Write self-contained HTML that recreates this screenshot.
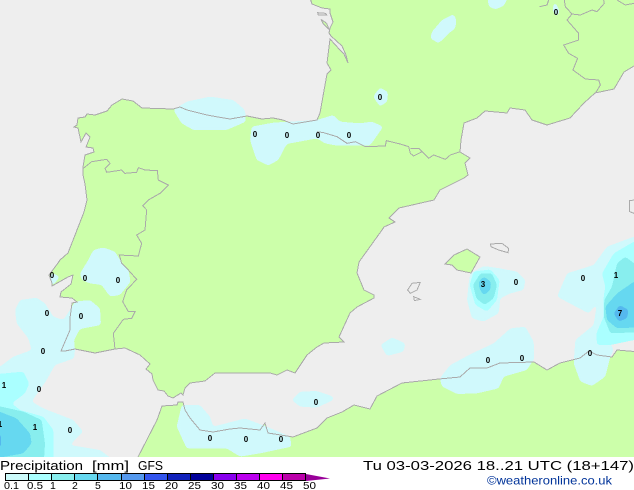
<!DOCTYPE html>
<html><head><meta charset="utf-8"><style>
html,body{margin:0;padding:0;background:#fff;width:634px;height:490px;overflow:hidden}
svg{display:block}
.t{font-family:"Liberation Sans",sans-serif;fill:#000}
.n{font-family:"Liberation Sans",sans-serif;font-size:8px;font-weight:bold;fill:#000;text-anchor:middle}
.l{font-family:"Liberation Sans",sans-serif;font-size:10.5px;fill:#000}
.r0{fill:#d0f9fc}.r1{fill:#aaffff}.r2{fill:#88eeee}.r3{fill:#66d8f0}.r4{fill:#55b8ee}
.s polygon{filter:url(#s)}
.c{fill:none;stroke:#aaaaaa;stroke-width:1;shape-rendering:crispEdges}
</style></head><body>
<svg width="634" height="490" viewBox="0 0 634 490" xmlns="http://www.w3.org/2000/svg">
<rect width="634" height="457" fill="#eeeeee"/>
<defs>
<filter id="s" x="-30%" y="-30%" width="160%" height="160%" color-interpolation-filters="sRGB">
<feGaussianBlur stdDeviation="5"/>
<feComponentTransfer><feFuncA type="discrete" tableValues="0 1"/></feComponentTransfer>
</filter>
<polygon id="eu" points="310,-2 312,4 322,8 330,9 330,13 333,22 330,28 329,33 331,36 342,46 346,55 348,63 344,54 340,50 330,39 327,63 331,70 327,74 325,85 320,113 317,120 305,122 293,124 283,120 273,118 262,119 247,116 230,119 218,117 207,115 187,110 180,107 173,109 142,108 133,101 122,99 112,105 107,111 95,115 87,114 85,117 78,118 77,125 74,127 78,128 81,142 86,133 90,137 86,147 93,148 94,152 85,155 83,167 83,175 85,184 87,200 84,212 77,230 68,253 60,260 58,263 55,267 49,275 52,283 52,286 68,277 73,275 71,284 61,292 60,297 72,298 77,302 72,303 70,318 70,330 61,351 65,351 75,349 95,353 115,349 125,348 140,355 150,364 146,369 152,374 153,380 158,390 164,391 168,396 173,398 181,393 183,395 185,388 190,383 205,381 215,373 230,373 270,373 277,375 287,370 295,373 307,355 317,347 324,343 344,342 339,337 350,313 357,307 374,298 374,295 364,290 357,273 359,262 382,230 384,227 395,222 389,218 399,208 434,200 440,190 464,178 468,175 465,163 470,158 460,152 461,140 464,123 477,118 485,111 507,113 510,108 525,110 532,120 547,125 570,118 584,103 595,93 614,89 624,72 634,66 640,66 640,-2"/>
<polygon id="af" points="137,459 157,420 162,406 177,405 178,402 183,402 185,410 190,418 200,430 213,432 230,429 240,428 260,430 265,423 268,433 293,437 317,428 327,418 342,412 354,405 370,409 377,396 402,383 439,379 460,377 470,368 487,368 500,363 534,362 547,370 560,363 580,358 589,351 597,355 612,357 617,350 640,352 640,459"/>
<polygon id="ma" points="445,264 454,255 467,249 480,257 471,273 457,270 452,265"/>
</defs>
<use href="#eu" fill="#ccffaa"/>
<use href="#af" fill="#ccffaa"/>
<use href="#ma" fill="#ccffaa"/>

<!-- north rain -->
<g transform="scale(.33333)" class="r0 s">
<polygon points="520,330 560,305 630,290 700,300 735,330 738,365 680,390 580,390 545,370"/>
<polygon points="755,380 820,368 951,360 1000,345 1020,365 1080,370 1115,365 1150,380 1110,437 1010,437 975,430 951,415 860,432 835,480 805,497 770,480 750,420"/>
<polygon points="1140,262 1164,276 1162,305 1140,320 1119,290"/>
<polygon points="1296,95 1326,60 1361,42 1369,60 1366,85 1346,100 1316,130 1291,115"/>
<polygon points="1459,-40 1521,-40 1521,0 1511,18 1486,28 1466,20"/>
<polygon points="1660,10 1669,10 1679,35 1669,52 1659,35"/>
</g>
<!-- west rain -->
<g transform="translate(0,230) scale(.33333)" class="s">
<g class="r0">
<polygon points="240,130 265,90 280,60 310,52 345,65 360,90 385,120 392,155 360,195 330,200 305,165 270,160 245,150"/>
<polygon points="45,240 60,210 110,203 135,220 160,260 190,270 210,240 225,215 270,210 300,235 303,285 240,297 222,330 225,360 222,385 165,405 140,450 95,515 130,535 220,570 250,605 210,645 300,660 340,690 300,720 -40,720 -40,410 0,410 40,380 95,360 85,325 50,280"/>
<polygon points="152,127 180,140 160,165 152,160"/>
<polygon points="545,525 600,525 630,560 640,590 735,565 800,590 870,620 875,650 780,670 720,680 680,655 560,655 530,590"/>
<polygon points="875,510 900,485 951,483 1000,500 1000,510 951,533 900,530"/>
</g>
<polygon class="r1" points="-40,435 70,425 88,460 75,490 35,520 60,540 130,560 160,600 160,720 -40,720"/>
<polygon class="r2" points="-40,520 70,545 125,570 135,640 130,720 -40,720"/>
<polygon class="r3" points="-40,530 50,565 90,610 95,640 70,670 -40,690"/>
<polygon class="r4" points="-40,605 3,615 3,650 -40,660"/>
</g>
<!-- east rain -->
<g transform="translate(317,230) scale(.33333)" class="s">
<g class="r0">
<polygon points="460,130 500,108 550,115 600,125 625,150 620,180 580,190 550,205 545,250 500,275 465,265 450,210 455,160"/>
<polygon points="190,345 225,322 265,340 260,365 210,378"/>
<polygon points="368,445 400,405 465,370 530,340 580,295 625,290 650,335 652,385 630,420 560,440 545,475 480,490 420,492 375,470"/>
<polygon points="720,200 750,130 830,105 870,50 951,20 1000,10 1000,320 880,340 890,360 880,380 865,440 825,468 790,455 770,400 775,330 830,285 840,220 815,250"/>
</g>
<polygon class="r1" points="458,165 470,125 520,118 548,150 540,210 510,245 475,225"/>
<polygon class="r2" points="468,165 490,130 525,130 540,165 530,205 503,225 478,205"/>
<polygon class="r3" points="485,155 500,140 522,155 520,180 500,197 487,175"/>
<polygon class="r1" points="855,130 890,70 951,35 1000,25 1000,320 880,345 840,345 838,310 860,260 860,200 865,170"/>
<polygon class="r2" points="885,170 900,100 925,80 951,100 1000,100 1000,305 880,310 860,260 862,210"/>
<polygon class="r3" points="865,230 900,190 951,155 1000,140 1000,290 900,295 870,270"/>
<polygon class="r4" points="890,250 908,225 935,240 930,265 905,275"/>
</g>

<!-- coast lines -->
<use href="#eu" class="c"/>
<use href="#af" class="c"/>
<use href="#ma" class="c"/>
<g transform="translate(317,0) scale(.33333)" fill="none" stroke="#aaaaaa" stroke-width="3" shape-rendering="crispEdges">
<polyline points="0,395 20,398 60,410 90,430 115,425 145,440 205,438 208,422 250,432 275,440 280,460 290,468 315,455 335,475 350,465 385,478 400,465 430,455"/>
<polyline points="280,445 305,445 315,455"/>
<polyline points="742,0 745,20 765,42 750,60 785,100 785,120 740,135 755,160 782,175 768,210 805,237 845,240 850,255 835,280"/>
<polyline points="765,42 790,45 825,30 840,35 862,10 860,0"/>
<polyline points="900,0 925,15 951,10"/>
<polyline points="668,20 690,15 695,0"/>
<polyline points="951,600 938,602 938,635 951,640"/>
</g>
<g transform="translate(305,0) scale(.33333)" fill="none" stroke="#aaaaaa" stroke-width="3" shape-rendering="crispEdges">
<polygon points="38,38 62,40 65,45 40,45"/>
<polygon points="48,58 65,70 72,88 55,72" fill="#ccffaa"/>
</g>
<g transform="scale(.33333)" fill="none" stroke="#aaaaaa" stroke-width="3" shape-rendering="crispEdges">
<polyline points="250,505 275,485 320,478 330,490 315,505 320,517 365,510 375,520 410,517 415,503 435,510 472,512 475,540 505,555 480,580 445,600 428,617 440,630 435,690 410,705 425,730 415,768 358,765 365,790 385,810 410,838 380,870 368,905 385,935 405,935 395,955 370,958 340,1000 345,1048"/>
</g>
<g transform="translate(317,230) scale(.33333)" fill="none" stroke="#aaaaaa" stroke-width="3" shape-rendering="crispEdges">
<polygon points="520,42 555,40 575,55 573,68 545,60 522,50"/>
<polygon points="272,180 285,160 310,157 300,180 280,190"/>
<polygon points="290,200 310,208 292,212"/>
</g>

<!-- numbers -->
<text class="n" x="255" y="137">0</text><text class="n" x="287" y="138">0</text><text class="n" x="318" y="138">0</text><text class="n" x="349" y="138">0</text>
<text class="n" x="380" y="100">0</text><text class="n" x="556" y="15">0</text>
<text class="n" x="52" y="278">0</text><text class="n" x="85" y="281">0</text><text class="n" x="118" y="283">0</text>
<text class="n" x="47" y="316">0</text><text class="n" x="81" y="319">0</text><text class="n" x="43" y="354">0</text>
<text class="n" x="39" y="392">0</text><text class="n" x="4" y="388">1</text><text class="n" x="35" y="430">1</text><text class="n" x="0" y="427">1</text><text class="n" x="70" y="433">0</text>
<text class="n" x="210" y="441">0</text><text class="n" x="246" y="442">0</text><text class="n" x="281" y="442">0</text><text class="n" x="316" y="405">0</text>
<text class="n" x="483" y="287">3</text><text class="n" x="516" y="285">0</text><text class="n" x="583" y="281">0</text><text class="n" x="616" y="278">1</text><text class="n" x="620" y="316">7</text>
<text class="n" x="488" y="363">0</text><text class="n" x="522" y="361">0</text><text class="n" x="590" y="356">0</text>

<rect y="457" width="634" height="33" fill="#fff"/>
<!-- legend titles -->
<text class="t" x="0" y="470" font-size="13" textLength="83" lengthAdjust="spacingAndGlyphs">Precipitation</text>
<text class="t" x="92" y="470" font-size="13" textLength="37" lengthAdjust="spacingAndGlyphs">[mm]</text>
<text class="t" x="138" y="470" font-size="13" textLength="25" lengthAdjust="spacingAndGlyphs">GFS</text>
<text class="t" x="363" y="470" font-size="13" textLength="271" lengthAdjust="spacingAndGlyphs">Tu 03-03-2026 18..21 UTC (18+147)</text>
<text x="487" y="484.5" font-family="Liberation Sans,sans-serif" font-size="12" fill="#003399" textLength="125" lengthAdjust="spacingAndGlyphs">©weatheronline.co.uk</text>

<!-- colour bar -->
<g shape-rendering="crispEdges" stroke="#000" stroke-width="1">
<rect x="5.5" y="473.5" width="23" height="7" fill="#ccfafa"/>
<rect x="28.5" y="473.5" width="23" height="7" fill="#aaffff"/>
<rect x="51.5" y="473.5" width="23" height="7" fill="#88eeee"/>
<rect x="74.5" y="473.5" width="23" height="7" fill="#66d8f0"/>
<rect x="97.5" y="473.5" width="24" height="7" fill="#55b8ee"/>
<rect x="121.5" y="473.5" width="23" height="7" fill="#5599ee"/>
<rect x="144.5" y="473.5" width="23" height="7" fill="#3355ee"/>
<rect x="167.5" y="473.5" width="23" height="7" fill="#1122bb"/>
<rect x="190.5" y="473.5" width="23" height="7" fill="#000099"/>
<rect x="213.5" y="473.5" width="23" height="7" fill="#8800ee"/>
<rect x="236.5" y="473.5" width="23" height="7" fill="#bb00ee"/>
<rect x="259.5" y="473.5" width="23" height="7" fill="#ff00ee"/>
<rect x="282.5" y="473.5" width="23" height="7" fill="#bb00aa"/>
</g>
<polygon points="306,474 330,478.5 306,481" fill="#990099"/>
<text class="l" x="4" y="489" textLength="15" lengthAdjust="spacingAndGlyphs">0.1</text>
<text class="l" x="27" y="489" textLength="16" lengthAdjust="spacingAndGlyphs">0.5</text>
<text class="l" x="50" y="489">1</text>
<text class="l" x="72" y="489">2</text>
<text class="l" x="95" y="489">5</text>
<text class="l" x="119" y="489" textLength="13" lengthAdjust="spacingAndGlyphs">10</text>
<text class="l" x="142" y="489" textLength="13" lengthAdjust="spacingAndGlyphs">15</text>
<text class="l" x="165" y="489" textLength="13" lengthAdjust="spacingAndGlyphs">20</text>
<text class="l" x="188" y="489" textLength="13" lengthAdjust="spacingAndGlyphs">25</text>
<text class="l" x="211" y="489" textLength="13" lengthAdjust="spacingAndGlyphs">30</text>
<text class="l" x="234" y="489" textLength="13" lengthAdjust="spacingAndGlyphs">35</text>
<text class="l" x="257" y="489" textLength="13" lengthAdjust="spacingAndGlyphs">40</text>
<text class="l" x="280" y="489" textLength="13" lengthAdjust="spacingAndGlyphs">45</text>
<text class="l" x="303" y="489" textLength="13" lengthAdjust="spacingAndGlyphs">50</text>
</svg>
</body></html>
